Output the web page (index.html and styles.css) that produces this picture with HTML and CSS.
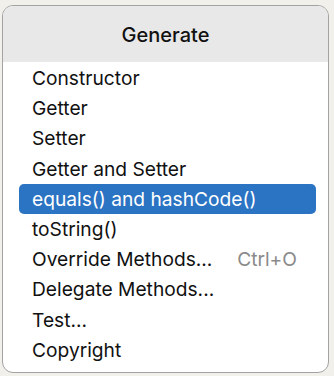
FILE: index.html
```html
<!DOCTYPE html>
<html>
<head>
<meta charset="utf-8">
<link rel="stylesheet" href="styles.css">
</head>
<body>
<div class="popup">
  <div class="header">Generate</div>
  <ul class="list">
    <li class="item">Constructor</li>
    <li class="item">Getter</li>
    <li class="item">Setter</li>
    <li class="item">Getter and Setter</li>
    <li class="item selected">equals() and hashCode()</li>
    <li class="item">toString()</li>
    <li class="item"><span>Override Methods...</span><span class="shortcut">Ctrl+O</span></li>
    <li class="item">Delegate Methods...</li>
    <li class="item">Test...</li>
    <li class="item">Copyright</li>
  </ul>
</div>
</body>
</html>
```
FILE: styles.css
```css
html, body {
  margin: 0;
  padding: 0;
  background: #f1f0eb;
  font-family: Inter, "Noto Sans", sans-serif;
}
.popup {
  margin: 5px 0 0 2px;
  width: 327px;
  height: 368px;
  box-sizing: border-box;
  border: 1.5px solid #a3a3a3;
  border-radius: 11px;
  background: #ffffff;
  overflow: hidden;
  display: flex;
  flex-direction: column;
}
.header {
  height: 56px;
  flex: none;
  background: #e8e8e8;
  display: flex;
  align-items: center;
  justify-content: center;
  font-size: 20px;
  font-weight: 500;
  color: #111;
  padding-top: 2px;
  box-sizing: border-box;
}
.list {
  list-style: none;
  margin: 0;
  padding: 1px 12px 0 16px;
}
.item {
  height: 30.2px;
  display: flex;
  align-items: center;
  justify-content: space-between;
  padding: 0 19px 0 13px;
  box-sizing: border-box;
  font-size: 19.2px;
  color: #111;
  border-radius: 5px;
}
.item.selected {
  background: #2b73c3;
  color: #ffffff;
}
.shortcut {
  color: #8a8a8a;
}
```
